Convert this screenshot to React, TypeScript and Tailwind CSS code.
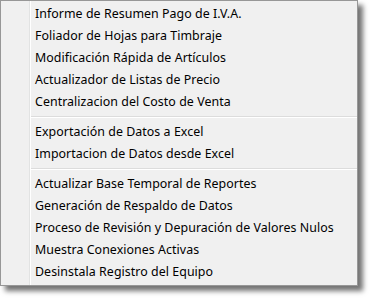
import React from "react";

const groups = [
  [
    "Informe de Resumen Pago de I.V.A.",
    "Foliador de Hojas para Timbraje",
    "Modificación Rápida de Artículos",
    "Actualizador de Listas de Precio",
    "Centralizacion del Costo de Venta",
  ],
  ["Exportación de Datos a Excel", "Importacion de Datos desde Excel"],
  [
    "Actualizar Base Temporal de Reportes",
    "Generación de Respaldo de Datos",
    "Proceso de Revisión y Depuración de Valores Nulos",
    "Muestra Conexiones Activas",
    "Desinstala Registro del Equipo",
  ],
];

export default function App() {
  return (
    <div className="w-[373px] h-[300px] bg-white relative" style={{ fontFamily: '"Noto Sans", "Open Sans", sans-serif' }}>
      <div className="w-[358px] h-[286px] border border-[#979797] bg-[#f0f0f0] shadow-[5px_5px_5px_rgba(0,0,0,0.55)] flex">
        <div className="w-[29px] shrink-0 border-r border-[#e2e3e3]" />
        <div className="flex-1 border-l border-white pt-[2px]">
          {groups.map((g, gi) => (
            <div key={gi}>
              {gi > 0 && (
                <div className="h-[8px] flex flex-col justify-center">
                  <div className="h-px bg-[#dcdcdc]" />
                  <div className="h-px bg-white" />
                </div>
              )}
              {g.map((t) => (
                <div key={t} className="h-[22px] flex items-center pl-[4px] text-[12.4px] tracking-[0.05px] text-black leading-none">
                  {t}
                </div>
              ))}
            </div>
          ))}
        </div>
      </div>
    </div>
  );
}
